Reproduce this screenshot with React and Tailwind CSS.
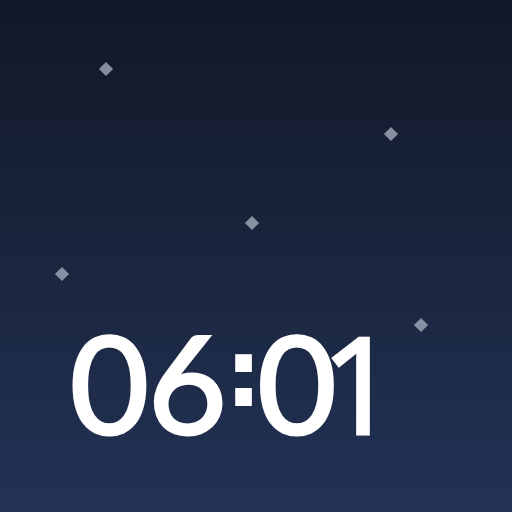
function Star({ className }) {
  return <div className={`absolute w-[10px] h-[10px] rotate-45 bg-[#a3abbb] opacity-80 ${className}`} />;
}

export default function App() {
  return (
    <div className="relative w-[512px] h-[512px] overflow-hidden bg-gradient-to-b from-[#111827] to-[#233356]">
      <Star className="left-[101px] top-[64px]" />
      <Star className="left-[386px] top-[129px]" />
      <Star className="left-[247px] top-[218px]" />
      <Star className="left-[57px] top-[269px]" />
      <Star className="left-[416px] top-[320px]" />
      <div className="flex flex-col h-full justify-end pb-[62px] pl-[70px]">
        <div className="flex items-baseline text-white leading-none font-normal whitespace-nowrap font-['Lato',sans-serif] text-[136px] [-webkit-text-stroke:3px_white]">
          <span>0</span>
          <span className="-ml-[1px]">6</span>
          <span className="-ml-[2px] -translate-y-[28px] font-bold text-[94px] [-webkit-text-stroke:0px] font-['DejaVu_Sans',sans-serif]">:</span>
          <span className="-ml-[5px]">0</span>
          <span className="-ml-[15px] text-[134px] font-['Open_Sans',sans-serif]">1</span>
        </div>
      </div>
    </div>
  );
}
